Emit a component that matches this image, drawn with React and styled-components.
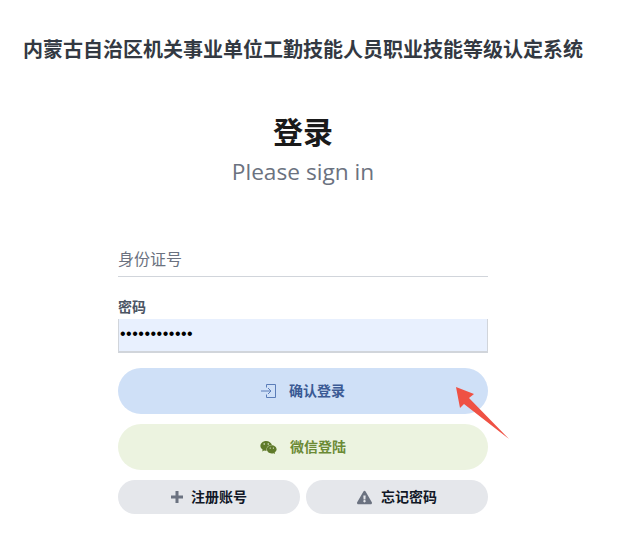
import React from "react"
import styled, { createGlobalStyle } from "styled-components"
import { FaWeixin, FaExclamationTriangle } from "react-icons/fa"

const Global = createGlobalStyle`
  html, body {
    margin: 0;
    padding: 0;
    background: #fff;
    font-family: "Open Sans", "Noto Sans CJK SC", sans-serif;
  }
`

const Page = styled.div`
  position: relative;
  width: 627px;
  height: 559px;
  overflow: hidden;
`

const SystemTitle = styled.h1`
  margin: 0;
  padding: 36px 0 0 23px;
  height: 28px;
  font-size: 20px;
  line-height: 28px;
  font-weight: 700;
  color: #333942;
  white-space: nowrap;
`

const Heading = styled.div`
  width: 606px;
  margin-top: 50px;
  text-align: center;
`

const HeadingTitle = styled.h2`
  margin: 0;
  font-size: 30px;
  line-height: 36px;
  font-weight: 700;
  color: #1a1a1a;
`

const Subtitle = styled.p`
  margin: 7px 0 0;
  font-size: 22.7px;
  line-height: 30px;
  color: #6b7280;
`

const Form = styled.form`
  display: flex;
  flex-direction: column;
  width: 370px;
  margin: 54px 0 0 118px;
`

const IdInput = styled.div`
  height: 35px;
  line-height: 37px;
  font-size: 16px;
  color: #6b7280;
  border-bottom: 1px solid #d1d5db;
`

const Label = styled.label`
  margin-top: 21px;
  height: 21px;
  font-size: 14px;
  line-height: 17px;
  font-weight: 700;
  color: #4b5563;
`

const PasswordInput = styled.div`
  box-sizing: border-box;
  height: 34px;
  padding-left: 1px;
  line-height: 29px;
  font-size: 16px;
  font-family: "Liberation Sans", sans-serif;
  letter-spacing: 0.5px;
  color: #000;
  background: #e8f0fe;
  border: solid #d1d5db;
  border-width: 0 1px 2px 1px;
`

const Button = styled.button`
  display: flex;
  align-items: center;
  justify-content: center;
  height: 46px;
  margin-top: ${(p) => p.$top}px;
  padding: 0;
  border: 0;
  border-radius: 23px;
  background: ${(p) => p.$bg};
  color: ${(p) => p.$color};
  font-family: inherit;
  font-size: 14px;
  font-weight: 700;
`

const ButtonText = styled.span`
  margin-bottom: 2px;
`

const ButtonIcon = styled.span`
  display: flex;
  margin-right: ${(p) => p.$gap}px;
  color: ${(p) => p.$color};
`

const SmallRow = styled.div`
  display: grid;
  grid-template-columns: 1fr 1fr;
  gap: 6px;
  margin-top: 10px;
`

const SmallButton = styled(Button)`
  height: 34px;
  margin-top: 0;
  border-radius: 17px;
  background: #e5e7eb;
  color: #111827;
`

const Arrow = styled.svg`
  position: absolute;
  left: 450px;
  top: 380px;
`

const LoginIcon = () => (
  <svg width="16" height="16" viewBox="0 0 16 16" fill="none" stroke="currentColor" strokeWidth="1">
    <path d="M5.5 1.5h9v13h-9M5.5 1.5v3M5.5 14.5v-3" />
    <path d="M0 8H10M7 5l3 3-3 3" />
  </svg>
)

const PlusIcon = () => (
  <svg width="12" height="12" viewBox="0 0 12 12" fill="currentColor">
    <path d="M4.5 0h3v4.5H12v3H7.5V12h-3V7.5H0v-3h4.5z" />
  </svg>
)

export default function App() {
  return (
    <Page>
      <Global />
      <SystemTitle>内蒙古自治区机关事业单位工勤技能人员职业技能等级认定系统</SystemTitle>
      <Heading>
        <HeadingTitle>登录</HeadingTitle>
        <Subtitle>Please sign in</Subtitle>
      </Heading>
      <Form>
        <IdInput>身份证号</IdInput>
        <Label>密码</Label>
        <PasswordInput>••••••••••••</PasswordInput>
        <Button type="button" $top={15} $bg="#cfe0f7" $color="#3b5a94">
          <ButtonIcon $gap={12} $color="#5b7db8"><LoginIcon /></ButtonIcon>
          <ButtonText>确认登录</ButtonText>
        </Button>
        <Button type="button" $top={10} $bg="#ecf3e0" $color="#6b8a35">
          <ButtonIcon $gap={13} $color="#5f7a2a"><FaWeixin size={17} /></ButtonIcon>
          <ButtonText>微信登陆</ButtonText>
        </Button>
        <SmallRow>
          <SmallButton type="button">
            <ButtonIcon $gap={8} $color="#6b7280"><PlusIcon /></ButtonIcon>
            <ButtonText>注册账号</ButtonText>
          </SmallButton>
          <SmallButton type="button">
            <ButtonIcon $gap={9} $color="#6b7280"><FaExclamationTriangle size={15} /></ButtonIcon>
            <ButtonText>忘记密码</ButtonText>
          </SmallButton>
        </SmallRow>
      </Form>
      <Arrow width="64" height="64" viewBox="0 0 64 64">
        <path d="M6 7 L24 14 L19 18 L59 59 L14 24 L10 28 Z" fill="#ef5144" />
      </Arrow>
    </Page>
  )
}
